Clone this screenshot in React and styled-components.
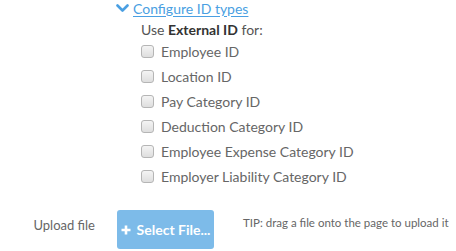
import React from "react";
import styled, { createGlobalStyle } from "styled-components";

const Global = createGlobalStyle`
  html, body { margin: 0; padding: 0; background: #fff; }
  body { font-family: Lato, "Open Sans", sans-serif; color: #666; }
`;

const Page = styled.div`
  width: 456px;
  height: 251px;
  overflow: hidden;
  display: flex;
  flex-direction: column;
`;

const Config = styled.div`
  padding-left: 116px;
  display: flex;
  flex-direction: column;
`;

const Toggle = styled.a`
  display: flex;
  align-items: center;
  height: 16px;
  font-size: 14px;
  color: #4a9fe2;
  text-decoration: underline;
  text-underline-offset: 2px;
  cursor: pointer;
`;

const Chevron = styled.svg`
  width: 13px;
  height: 9px;
  margin-right: 4px;
  margin-top: 1px;
`;

const Intro = styled.div`
  margin: 5px 0 0 25px;
  height: 18px;
  line-height: 18px;
  font-size: 14px;
  color: #555;
  b { color: #333; font-weight: 700; }
`;

const List = styled.div`
  margin-left: 25px;
  display: flex;
  flex-direction: column;
`;

const Row = styled.label`
  height: 25px;
  display: flex;
  align-items: center;
  gap: 7px;
  font-size: 14px;
  color: #666;
`;

const Box = styled.span`
  width: 11px;
  height: 11px;
  border: 1px solid #b5b5b5;
  border-radius: 3px;
  background: linear-gradient(#f4f4f4, #dedede);
`;

const Upload = styled.div`
  margin-top: 21px;
  display: flex;
  align-items: flex-start;
`;

const UploadLabel = styled.div`
  width: 117px;
  padding-right: 22px;
  margin-top: 7px;
  box-sizing: border-box;
  text-align: right;
  line-height: 16px;
  font-size: 13px;
  color: #666;
  white-space: nowrap;
`;

const Button = styled.button`
  width: 97px;
  height: 39px;
  border: none;
  border-radius: 3px;
  background: #7dbbe9;
  color: #fff;
  font-family: Lato, sans-serif;
  font-weight: 700;
  font-size: 14px;
  display: flex;
  align-items: center;
  justify-content: center;
  gap: 6px;
  padding: 0;
`;

const Tip = styled.div`
  margin: 6px 0 0 29px;
  line-height: 14px;
  font-size: 11.5px;
  color: #666;
  white-space: nowrap;
`;

const items = [
  "Employee ID",
  "Location ID",
  "Pay Category ID",
  "Deduction Category ID",
  "Employee Expense Category ID",
  "Employer Liability Category ID",
];

export default function App() {
  return (
    <Page>
      <Global />
      <Config>
        <Toggle>
          <Chevron viewBox="0 0 13 9">
            <path d="M1.5 1.5 L6.5 6.5 L11.5 1.5" fill="none" stroke="#4a9fe2" strokeWidth="2.6" strokeLinecap="round" strokeLinejoin="round" />
          </Chevron>
          Configure ID types
        </Toggle>
        <Intro>
          Use <b>External ID</b> for:
        </Intro>
        <List>
          {items.map((t) => (
            <Row key={t}>
              <Box />
              {t}
            </Row>
          ))}
        </List>
      </Config>
      <Upload>
        <UploadLabel>Upload file</UploadLabel>
        <Button>
          <svg width="10" height="10" viewBox="0 0 10 10">
            <path d="M5 0.5 V9.5 M0.5 5 H9.5" stroke="#fff" strokeWidth="2.6" />
          </svg>
          Select File...
        </Button>
        <Tip>TIP: drag a file onto the page to upload it</Tip>
      </Upload>
    </Page>
  );
}
